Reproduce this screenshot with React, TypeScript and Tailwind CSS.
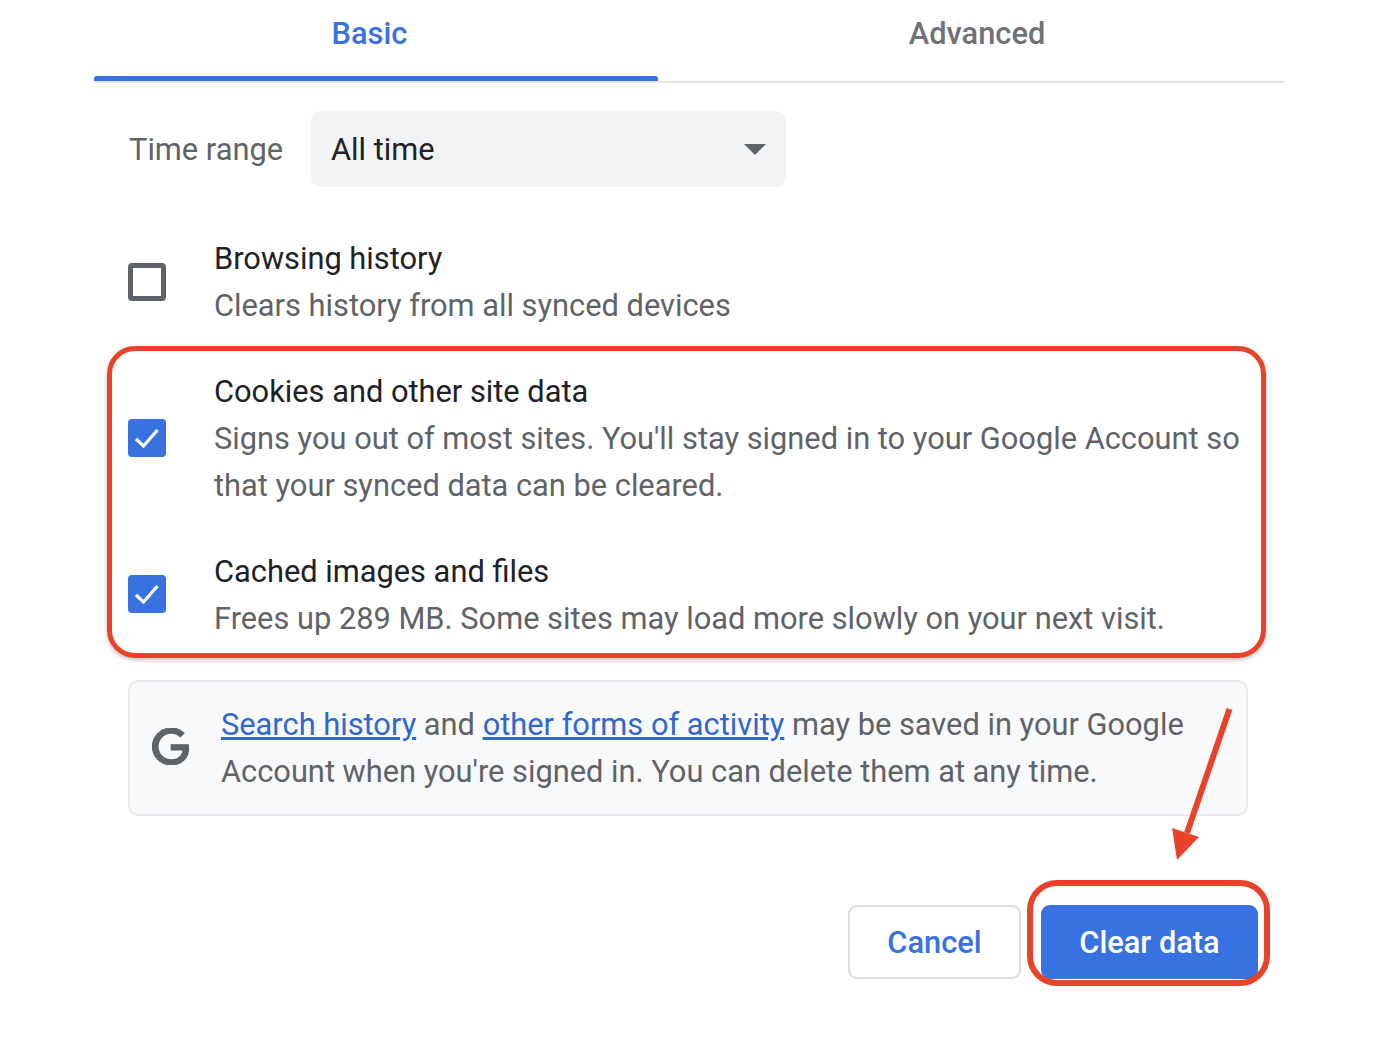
import { ReactNode } from "react";

const font = "font-['Roboto',sans-serif]";

function Checkbox({ checked }: { checked?: boolean }) {
  if (!checked) {
    return <div className="w-[38px] h-[38px] shrink-0 rounded-[4px] border-[5px] border-[#5f6368] mt-[1px]" />;
  }
  return (
    <div className="w-[38px] h-[38px] shrink-0 rounded-[4px] bg-[#3871e0] flex items-center justify-center">
      <svg width="26" height="22" viewBox="0 0 26 22" fill="none">
        <path d="M2 12 L9.5 19 L23.5 3" stroke="#fff" strokeWidth="3.2" />
      </svg>
    </div>
  );
}

function OptionRow({ checked, title, children }: { checked?: boolean; title: string; children: ReactNode }) {
  return (
    <div className="flex items-center">
      <Checkbox checked={checked} />
      <div className="ml-[48px] mt-[1px] mb-[-1px] whitespace-nowrap">
        <div className="text-[#202124]">{title}</div>
        <div className="text-[#5f6368]">{children}</div>
      </div>
    </div>
  );
}

export default function App() {
  return (
    <div className={`${font} relative w-full h-[1038px] bg-white overflow-hidden text-[30.8px] leading-[47px]`}>
      <div className="ml-[94px] w-[1190px]">
        {/* tabs */}
        <div className="flex h-[83px] border-b-2 border-[#e4e4e4] font-medium">
          <div className="w-[564px] h-[81px] flex flex-col justify-between text-center text-[#3871e0] pt-[10px]">
            <span className="pr-[13px]">Basic</span>
            <div className="h-[5px] rounded-t-[3px] bg-[#3871e0]" />
          </div>
          <div className="flex-1 text-center text-[#6f7276] pt-[10px] pl-[12px]">Advanced</div>
        </div>

        <div className="ml-[34px] w-[1120px]">
          {/* time range */}
          <div className="flex items-center mt-[28px]">
            <span className="w-[183px] pl-[1px] text-[#5f6368]">Time range</span>
            <div className="w-[475px] h-[76px] rounded-[10px] bg-[#f1f3f4] flex items-center justify-between pl-[20px] pr-[20px] text-[#202124]">
              All time
              <svg width="22" height="11" viewBox="0 0 22 11">
                <path d="M0 0 H22 L11 11 Z" fill="#5f6368" />
              </svg>
            </div>
          </div>

          <div className="mt-[47px] flex flex-col gap-[39px]">
            <OptionRow title="Browsing history">Clears history from all synced devices</OptionRow>
            <OptionRow checked title="Cookies and other site data">
              Signs you out of most sites. You'll stay signed in to your Google Account so
              <br />
              that your synced data can be cleared.
            </OptionRow>
            <OptionRow checked title="Cached images and files">
              Frees up 289 MB. Some sites may load more slowly on your next visit.
            </OptionRow>
          </div>

          {/* account notice */}
          <div className="mt-[38.5px] h-[136px] rounded-[10px] border-2 border-[#e8eaed] bg-[#f8f9fa] flex items-center pl-[22px] text-[#5f6368] whitespace-nowrap">
            <svg width="37" height="37" viewBox="0 0 24 24" fill="#5f6368" stroke="#5f6368" strokeWidth="0.8" className="shrink-0 mb-[3px]">
              <path d="M12.48 10.92v3.28h7.84c-.24 1.84-.853 3.187-1.787 4.133-1.147 1.147-2.933 2.4-6.053 2.4-4.827 0-8.6-3.893-8.6-8.72s3.773-8.72 8.6-8.72c2.6 0 4.507 1.027 5.907 2.347l2.307-2.307C18.747 1.44 16.133 0 12.48 0 5.867 0 .307 5.387.307 12s5.56 12 12.173 12c3.573 0 6.267-1.173 8.373-3.36 2.16-2.16 2.84-5.213 2.84-7.667 0-.76-.053-1.467-.173-2.053H12.48z" />
            </svg>
            <div className="ml-[32px] mt-[1px]">
              <a className="text-[#2f66d0] underline">Search history</a> and{" "}
              <a className="text-[#2f66d0] underline">other forms of activity</a> may be saved in your Google
              <br />
              Account when you're signed in. You can delete them at any time.
            </div>
          </div>

          {/* buttons */}
          <div className="mt-[89px] flex justify-end gap-[20px] font-medium mr-[-10px]">
            <button className="w-[173px] h-[74px] pt-[1px] rounded-[9px] border-2 border-[#dadce0] bg-white text-[#3871e0]">
              Cancel
            </button>
            <button className="w-[217px] h-[74px] pt-[1px] rounded-[9px] bg-[#3871e0] text-white">Clear data</button>
          </div>
        </div>
      </div>

      {/* red annotations */}
      <div className="absolute left-[107px] top-[346px] w-[1159px] h-[312px] rounded-[28px] border-[5px] border-[#e8432a] shadow-[0_2px_4px_rgba(0,0,0,0.25)]" />
      <div className="absolute left-[1027px] top-[880px] w-[243px] h-[106px] rounded-[30px] border-[6px] border-[#e8432a]" />
      <svg className="absolute left-[1160px] top-[700px]" width="80" height="170" viewBox="0 0 80 170">
        <path d="M69.5 9 L27 133" stroke="#e8432a" strokeWidth="6" />
        <path d="M12 128 L39 137 L17 160 Z" fill="#e8432a" />
      </svg>
    </div>
  );
}
